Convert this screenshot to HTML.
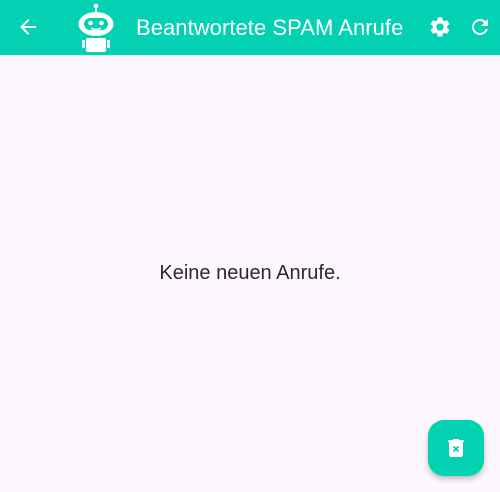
<!DOCTYPE html>
<html><head><meta charset="utf-8"><style>
html,body{margin:0;padding:0;width:500px;height:492px;overflow:hidden;background:#fdf8fd;font-family:"Liberation Sans",Roboto,sans-serif}
.bar{position:absolute;left:0;top:0;width:500px;height:55px;background:#03d1b3}
.title{position:absolute;left:136px;top:15px;color:#fff;font-size:22px;letter-spacing:0.05px}
.msg{position:absolute;left:0;width:500px;top:262px;text-align:center;font-size:20px;color:#2a2a2a}
.fab{position:absolute;left:428px;top:420px;width:56px;height:56px;border-radius:16px;background:#03d1b3;box-shadow:0 3px 6px rgba(0,0,0,.25)}
svg{position:absolute}
</style></head><body>
<div class="bar"></div>
<svg style="left:16px;top:15px" width="24" height="24" viewBox="0 0 24 24"><path d="M20 11H7.83l5.59-5.59L12 4l-8 8 8 8 1.41-1.41L7.83 13H20v-2z" fill="#fff"/></svg>
<svg style="left:76px;top:2px" width="40" height="52" viewBox="0 0 40 52">
<circle cx="20" cy="4" r="2.3" fill="#fff"/><rect x="19" y="5" width="2" height="6" fill="#fff"/>
<ellipse cx="20" cy="22" rx="17.5" ry="12" fill="#fff"/>
<rect x="8" y="16" width="24" height="12" rx="6" fill="#03d1b3"/>
<circle cx="14.5" cy="21" r="2.3" fill="#fff"/><circle cx="25.5" cy="21" r="2.3" fill="#fff"/>
<path d="M15 26 Q20 29 25 26" stroke="#fff" stroke-width="1.6" fill="none"/>
<rect x="10" y="36" width="20" height="14" rx="2" fill="#fff"/>
<rect x="6" y="38" width="3" height="8" rx="1" fill="#fff"/><rect x="31" y="38" width="3" height="8" rx="1" fill="#fff"/>
</svg>
<div class="title">Beantwortete SPAM Anrufe</div>
<svg style="left:428px;top:15px" width="24" height="24" viewBox="0 0 24 24"><path fill="#fff" d="M19.14 12.94c.04-.3.06-.61.06-.94 0-.32-.02-.64-.07-.94l2.030-1.58c.18-.14.23-.41.12-.61l-1.92-3.32c-.12-.22-.37-.29-.59-.22l-2.39.96c-.5-.38-1.03-.7-1.62-.94l-.36-2.54c-.04-.24-.24-.41-.48-.41h-3.84c-.24 0-.43.17-.47.41l-.36 2.54c-.59.24-1.130.57-1.62.94l-2.39-.96c-.22-.08-.47 0-.59.22L2.74 8.87c-.12.21-.08.47.12.61l2.03 1.58c-.05.3-.09.63-.09.94s.02.64.07.94l-2.03 1.58c-.18.14-.23.41-.12.61l1.92 3.32c.12.22.37.29.59.22l2.39-.96c.5.38 1.03.7 1.62.94l.36 2.54c.05.24.24.41.48.41h3.84c.24 0 .44-.17.47-.41l.36-2.54c.59-.24 1.13-.56 1.62-.94l2.39.96c.22.08.47 0 .59-.22l1.92-3.32c.12-.22.07-.47-.12-.61l-2.01-1.58zM12 15.6c-1.98 0-3.6-1.62-3.6-3.6s1.62-3.6 3.6-3.6 3.6 1.62 3.6 3.6-1.62 3.6-3.6 3.6z"/></svg>
<svg style="left:468px;top:15px" width="24" height="24" viewBox="0 0 24 24"><path fill="#fff" d="M17.65 6.35C16.2 4.9 14.21 4 12 4c-4.420 0-7.99 3.58-7.99 8s3.57 8 7.99 8c3.73 0 6.84-2.55 7.73-6h-2.08c-.82 2.33-3.04 4-5.65 4-3.31 0-6-2.69-6-6s2.69-6 6-6c1.66 0 3.14.69 4.22 1.78L13 11h7V4l-2.35 2.35z"/></svg>
<div class="msg">Keine neuen Anrufe.</div>
<div class="fab"></div>
<svg style="left:444px;top:436px" width="24" height="24" viewBox="0 0 24 24"><path fill="#fff" d="M15 4V3H9v1H4v2h1v13c0 1.1.9 2 2 2h10c1.1 0 2-.9 2-2V6h1V4h-5zm2 15H7V6h10v13z"/><rect x="7" y="6" width="10" height="13" fill="#fff"/><path d="M9.5 10.5l5 5M14.5 10.5l-5 5" stroke="#03d1b3" stroke-width="1.8"/></svg>
</body></html>
